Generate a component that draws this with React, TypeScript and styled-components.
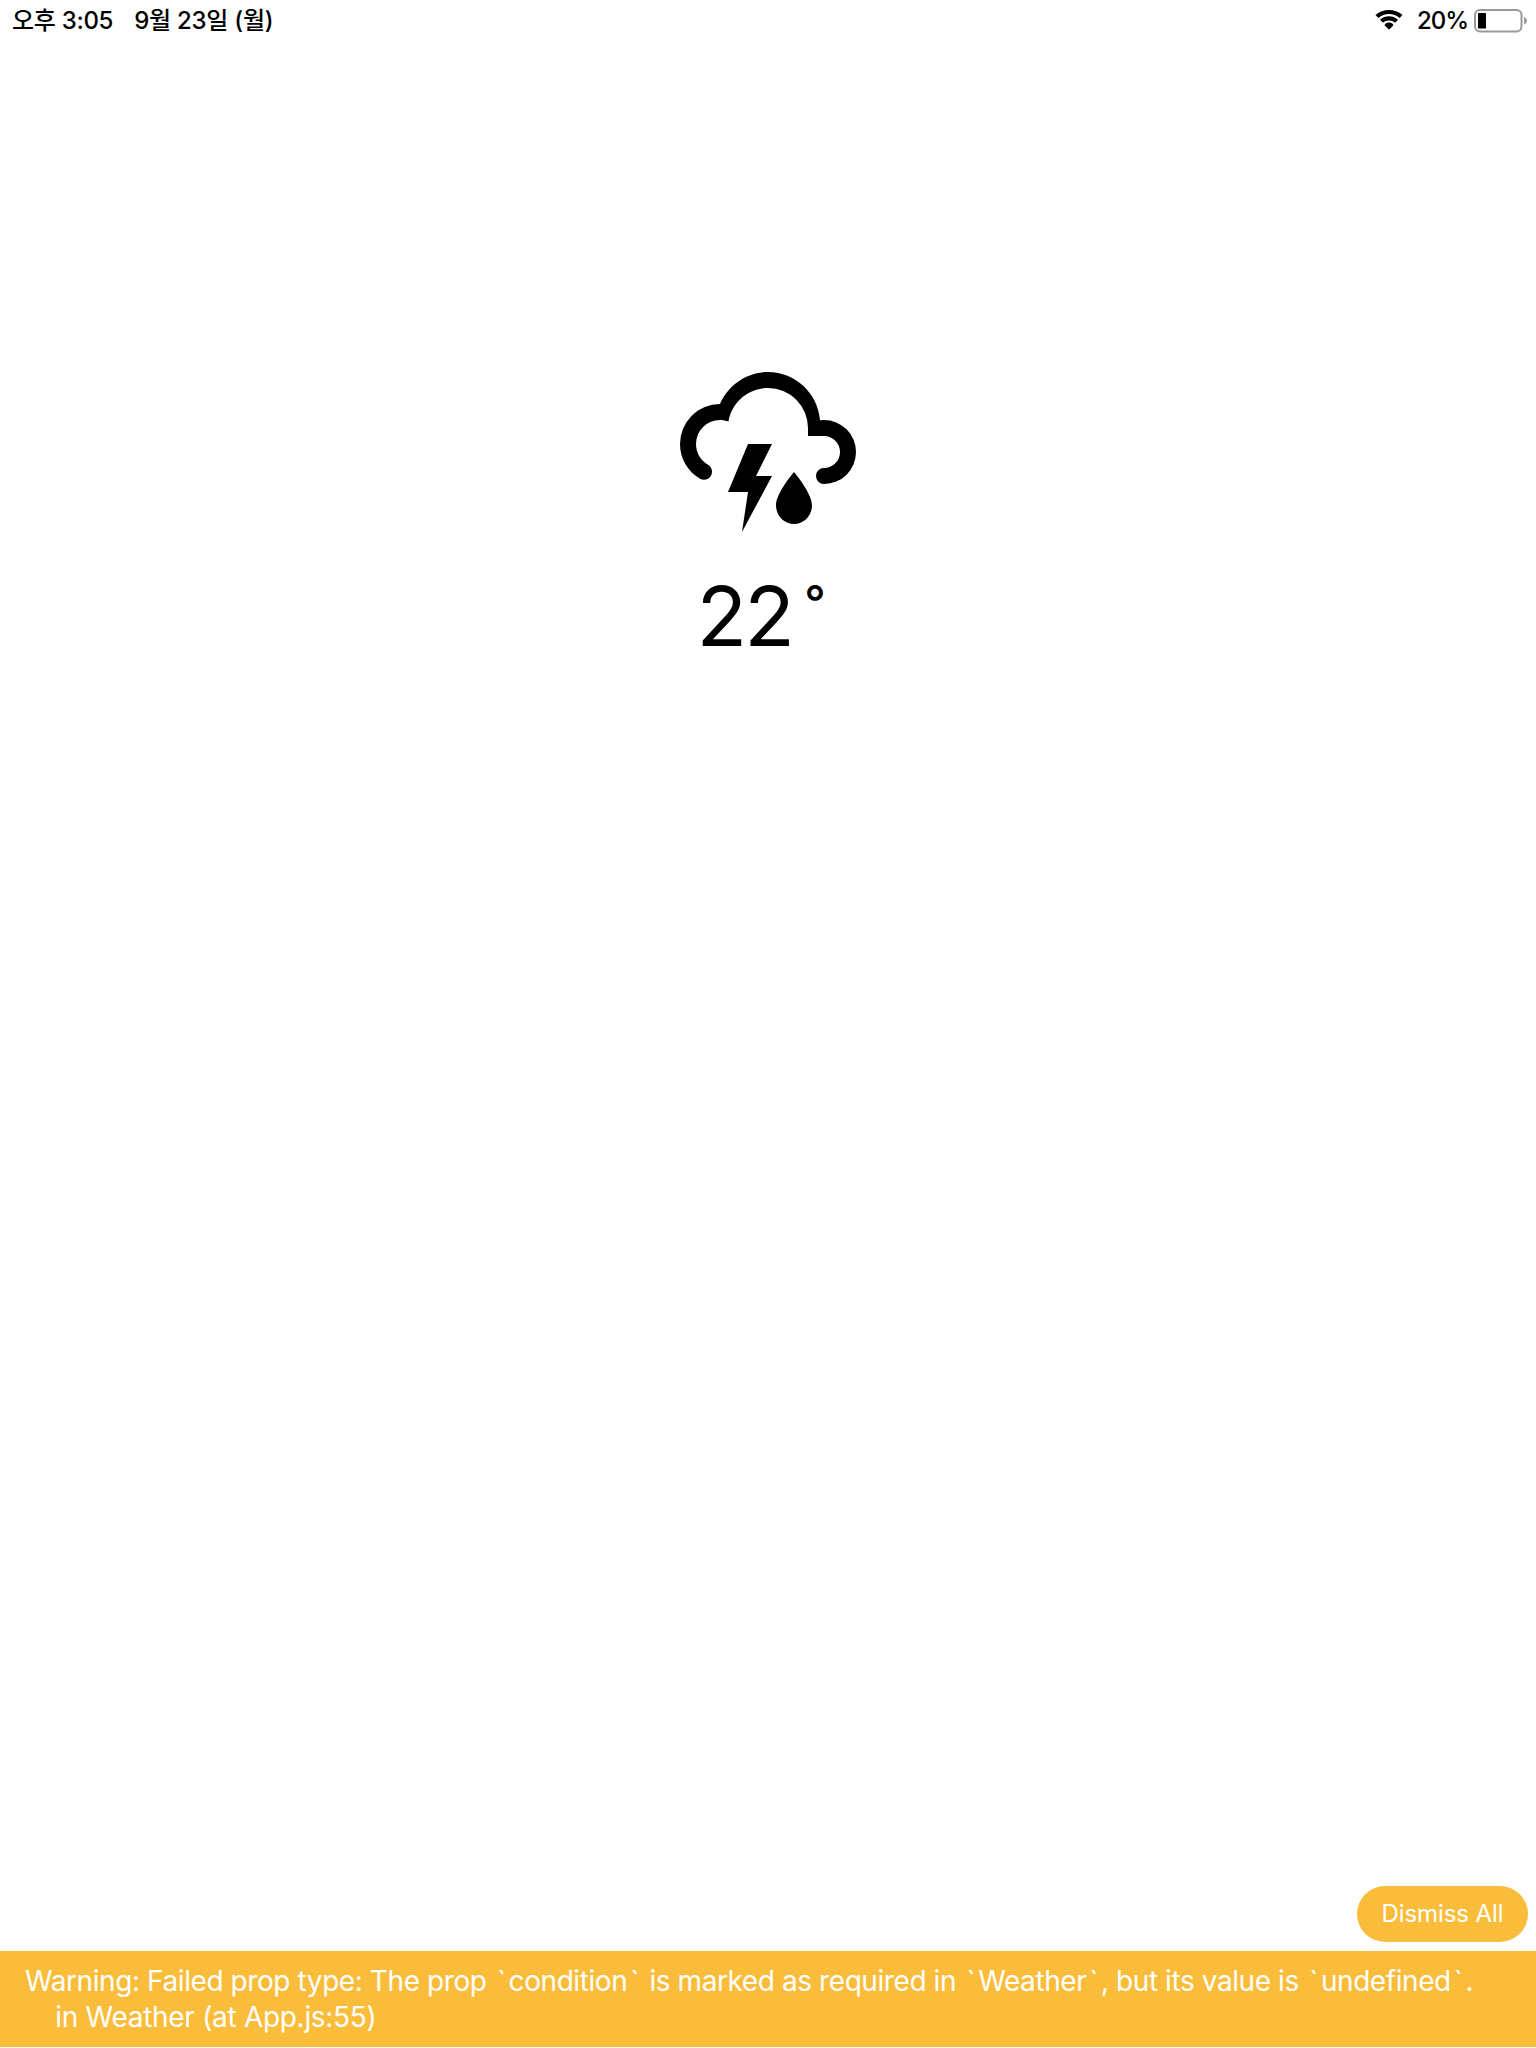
import React from "react";
import styled, { createGlobalStyle } from "styled-components";

const GlobalStyle = createGlobalStyle`
  * { box-sizing: border-box; }
  body { margin: 0; background: #fff; }
`;

const Screen = styled.div`
  display: flex;
  flex-direction: column;
  width: 1536px;
  height: 2048px;
  overflow: hidden;
  background: #fff;
  color: #000;
  font-family: Inter, "Noto Sans CJK KR", sans-serif;
  padding-bottom: 1px;
`;

const StatusBar = styled.header`
  display: flex;
  justify-content: space-between;
  height: 41px;
  padding: 1px 8px 0 12px;
  font-size: 24px;
  line-height: 40px;
  font-weight: 500;
`;

const StatusGroup = styled.div<{ $gap: number }>`
  display: flex;
  align-items: center;
  gap: ${(p) => p.$gap}px;
`;

const StatusText = styled.span<{ $spacing: number }>`
  letter-spacing: ${(p) => p.$spacing}px;
  white-space: nowrap;
`;

const WifiIcon = styled.svg`
  display: block;
  flex: none;
  width: 28px;
  height: 20px;
  margin: 0 8px 2px 0;
`;

const BatteryIcon = styled.svg`
  display: block;
  flex: none;
  width: 54px;
  height: 24px;
  margin-bottom: 1px;
`;

const Weather = styled.main`
  display: flex;
  flex: 1;
  flex-direction: column;
  align-items: center;
  padding-top: 315px;
`;

const WeatherIcon = styled.svg`
  display: block;
  width: 192px;
  height: 192px;
`;

const Temperature = styled.div`
  display: flex;
  width: 143px;
  margin-top: 16px;
  font-size: 83px;
  line-height: 105px;
  letter-spacing: -2.8px;
`;

const Degree = styled.span`
  margin-left: 12px;
  font-size: 47px;
  font-weight: 500;
  line-height: 75px;
  letter-spacing: 0;
`;

const DismissRow = styled.div`
  display: flex;
  justify-content: flex-end;
  padding: 0 8px 9px 0;
`;

const DismissButton = styled.button`
  width: 171px;
  height: 56px;
  padding: 0;
  border: 0;
  border-radius: 28px;
  background: #fabd3b;
  color: #fff;
  font: 400 24px/56px Inter, sans-serif;
  letter-spacing: -0.1px;
`;

const WarningBanner = styled.footer`
  height: 96px;
  padding: 12px 25px;
  background: #fabd3b;
  color: #fff;
  font-size: 28px;
  line-height: 36px;
`;

const WarningLine = styled.div<{ $spacing: number }>`
  white-space: pre;
  letter-spacing: ${(p) => p.$spacing}px;
`;

const Tick = styled.span`
  padding: 0 3px;
`;

export default function App() {
  return (
    <Screen>
      <GlobalStyle />
      <StatusBar>
        <StatusGroup $gap={21}>
          <StatusText $spacing={-0.3}>오후 3:05</StatusText>
          <StatusText $spacing={-0.25}>9월 23일 (월)</StatusText>
        </StatusGroup>
        <StatusGroup $gap={6}>
          <WifiIcon viewBox="0 0 28 20">
            <path d="M0.5 5C8-1.6 20-1.6 27.5 5L24.6 8C18.6 2.7 9.4 2.7 3.4 8Z" />
            <path d="M5 9.8C10 5.2 18 5.2 23 9.8L20 12.8C16.6 9.6 11.4 9.6 8 12.8Z" />
            <path d="M9.8 14.4C12 12 16 12 18.2 14.4C18.6 15 18.4 15.3 18 15.7L15 18.7C14.3 19.4 13.7 19.4 13 18.7L10 15.7C9.6 15.3 9.4 15 9.8 14.4Z" />
          </WifiIcon>
          <StatusText $spacing={-1}>20%</StatusText>
          <BatteryIcon viewBox="0 0 54 24">
            <rect x="1" y="1" width="46.5" height="21.5" rx="5" fill="none" stroke="#999" strokeWidth="2" />
            <rect x="4" y="4" width="8" height="15.5" rx="0.5" />
            <path d="M50 8C54 9.5 54 14 50 15.5Z" fill="#999" />
          </BatteryIcon>
        </StatusGroup>
      </StatusBar>
      <Weather>
        <WeatherIcon viewBox="0 0 24 24">
          <path d="M4.5,13.59C5,13.87 5.14,14.5 4.87,14.96C4.59,15.44 4,15.6 3.5,15.33V15.33C2,14.47 1,12.85 1,11A5,5 0 0,1 6,6C7,3.65 9.3,2 12,2C15.43,2 18.24,4.66 18.5,8.03L19,8A4,4 0 0,1 23,12A4,4 0 0,1 19,16A1,1 0 0,1 18,15A1,1 0 0,1 19,14A2,2 0 0,0 21,12A2,2 0 0,0 19,10H17V9A5,5 0 0,0 12,4C9.5,4 7.45,5.82 7.06,8.19C6.73,8.07 6.37,8 6,8A3,3 0 0,0 3,11C3,12.11 3.6,13.08 4.5,13.6V13.59M9.5,11H12.5L10.5,15H12.5L8.75,22L9.5,17H7L9.5,11M17.5,18.67C17.5,19.96 16.5,21 15.25,21C14,21 13,19.96 13,18.67C13,17.12 15.25,14.5 15.25,14.5C15.25,14.5 17.5,17.12 17.5,18.67Z" />
        </WeatherIcon>
        <Temperature>
          22<Degree>°</Degree>
        </Temperature>
      </Weather>
      <DismissRow>
        <DismissButton>Dismiss All</DismissButton>
      </DismissRow>
      <WarningBanner>
        <WarningLine $spacing={-0.42}>
          Warning: Failed prop type: The prop <Tick>`</Tick>condition<Tick>`</Tick> is marked as required in <Tick>`</Tick>Weather<Tick>`</Tick>, but its value is <Tick>`</Tick>undefined<Tick>`</Tick>.
        </WarningLine>
        <WarningLine $spacing={-0.3}>{"    in Weather (at App.js:55)"}</WarningLine>
      </WarningBanner>
    </Screen>
  );
}
